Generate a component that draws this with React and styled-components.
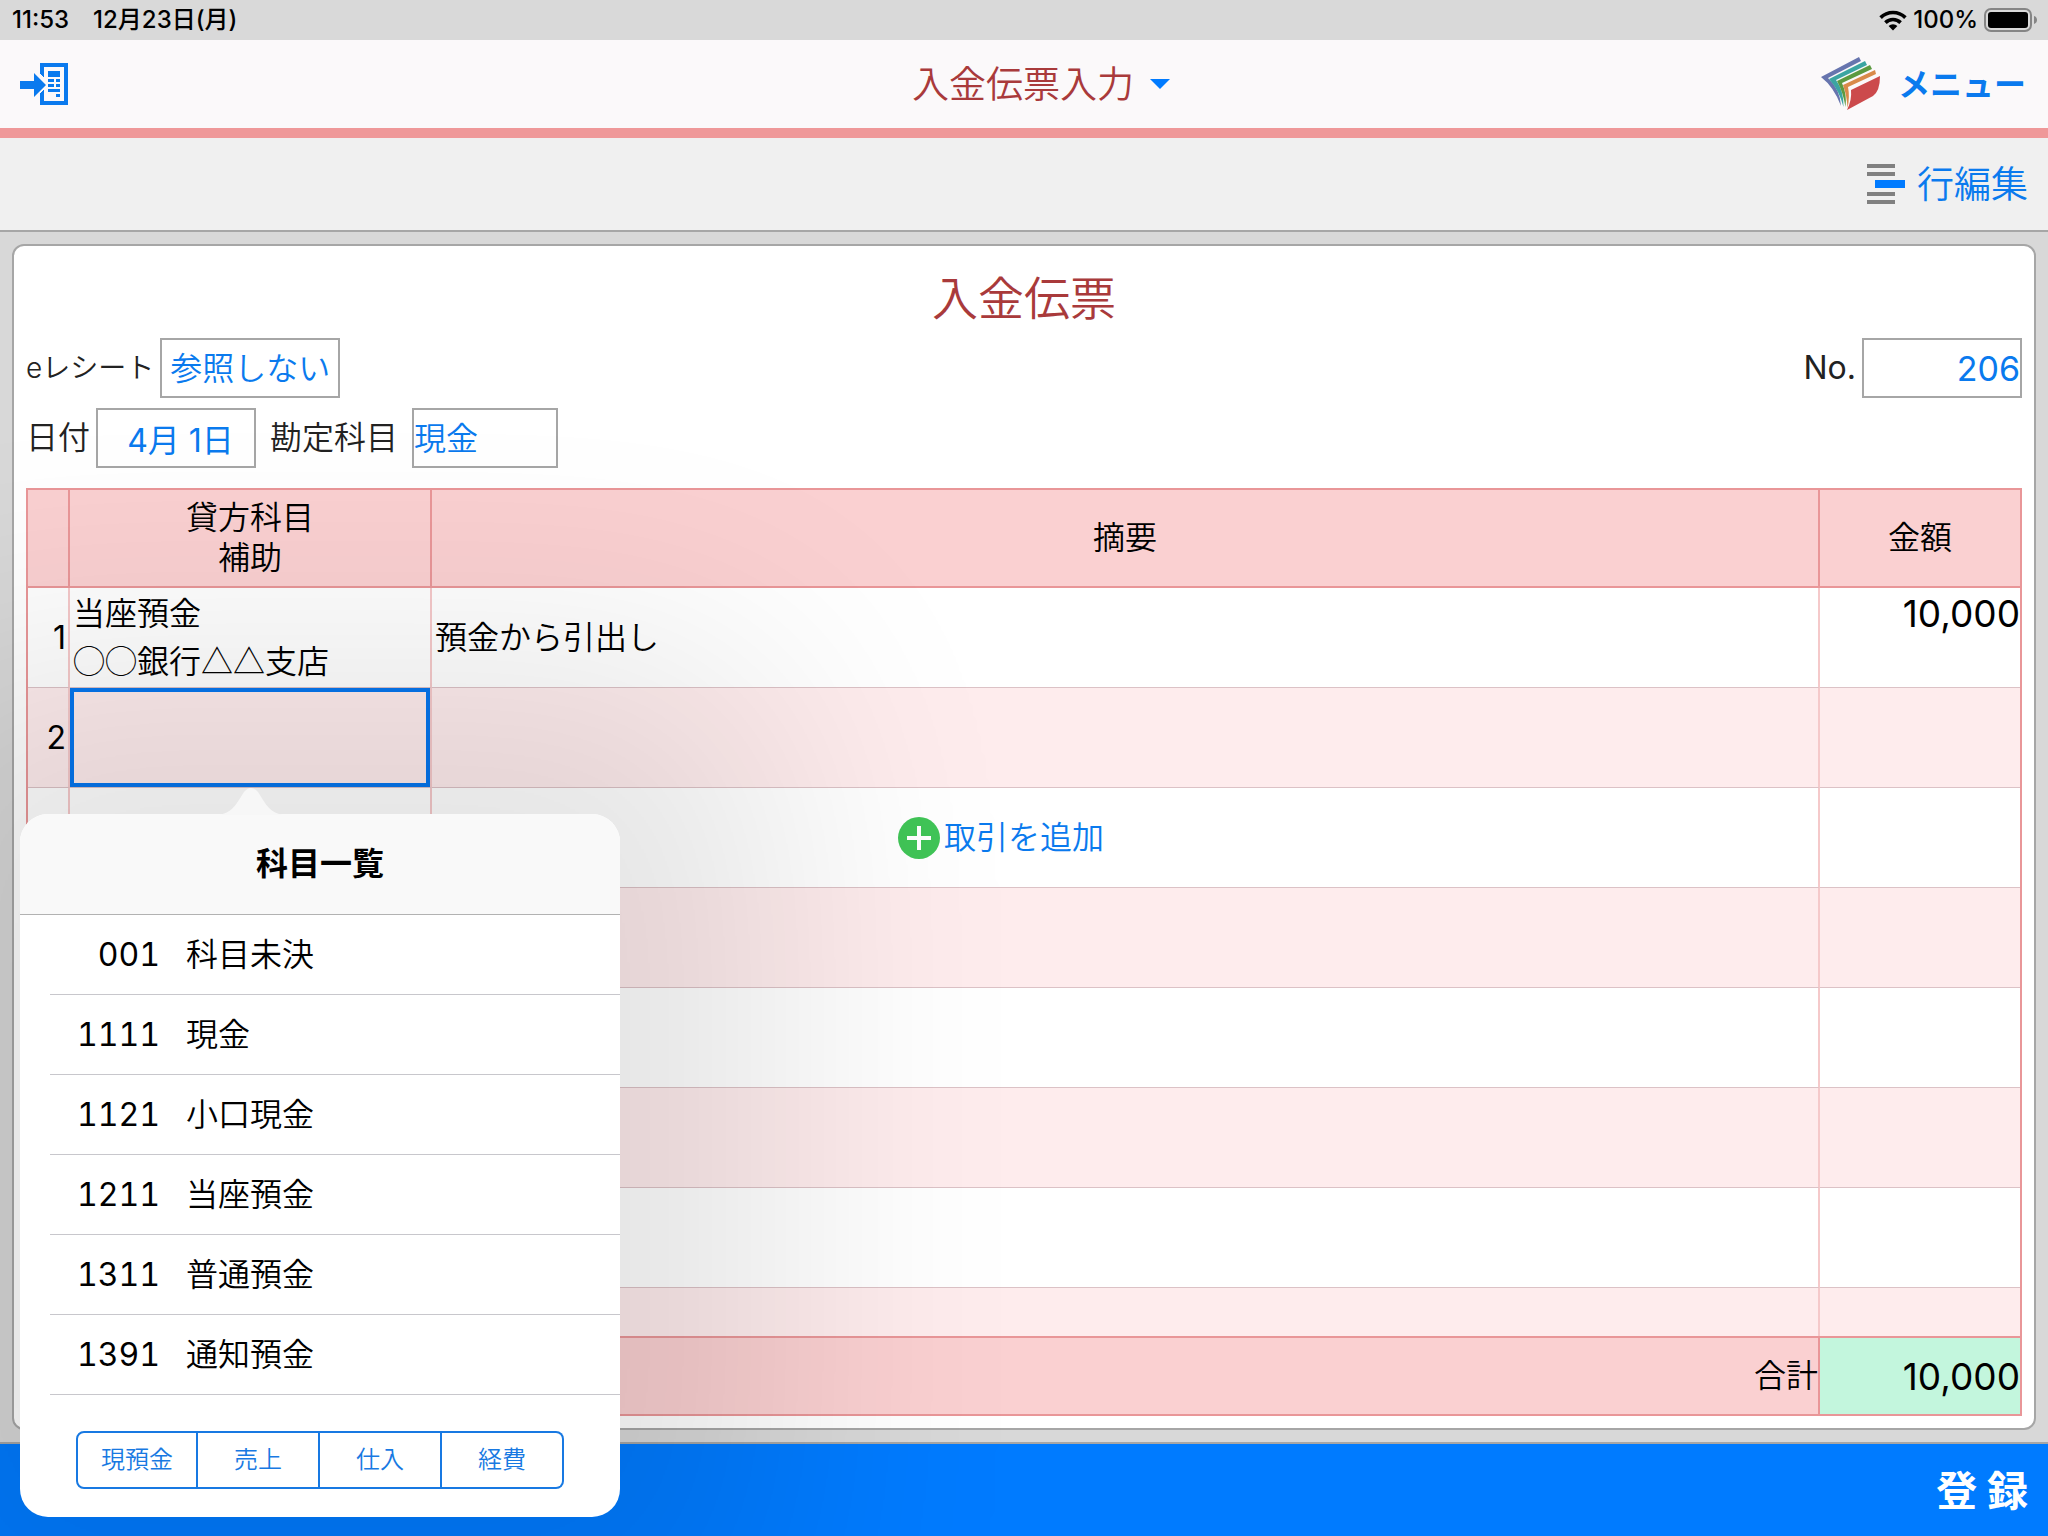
import React from "react";
import styled, { createGlobalStyle, css } from "styled-components";

const latin = `Inter, "Noto Sans CJK JP", sans-serif`;
const japanese = `"Noto Sans CJK JP", sans-serif`;
const blue = "#0a7aee";
const line = "#a6a6a6";
const rose = "#e99698";

const GlobalStyle = createGlobalStyle`
  *, *::before, *::after { box-sizing: border-box; }
  body {
    margin: 0;
    background: #d8d8d8;
    color: #000;
    font-family: ${latin};
    font-weight: 350;
    font-size: 32px;
  }
  button, input, select { font: inherit; color: inherit; margin: 0; padding: 0; border: 0; border-radius: 0; background: none; }
  button { cursor: pointer; }
`;

const Page = styled.div`
  display: flex;
  flex-direction: column;
  min-height: 100vh;
  overflow: hidden;
`;

const StatusBar = styled.div`
  display: flex;
  align-items: center;
  justify-content: space-between;
  height: 40px;
  padding: 0 10px 0 12px;
  background: #d9d9d9;
  font-size: 24px;
  font-weight: 500;
  line-height: 40px;
`;

const StatusGroup = styled.div`
  display: flex;
  align-items: center;
  gap: ${(p) => p.$gap}px;
`;

const Header = styled.header`
  display: grid;
  grid-template-columns: 1fr auto 1fr;
  align-items: center;
  height: 98px;
  padding: 0 22px 0 20px;
  background: #fbf9fa;
  border-bottom: 10px solid #ef9899;
`;

const IconButton = styled.button`
  justify-self: start;
  display: flex;
`;

const ButtonText = styled.span`
  padding-top: 2px;
  line-height: 48px;
`;

const TitleButton = styled.button`
  display: flex;
  align-items: center;
  gap: 16px;
  padding-left: 36px;
  color: #a93a3b;
  font-size: 37px;
`;

const MenuButton = styled.button`
  && {
    justify-self: end;
    display: flex;
    align-items: center;
    gap: 18px;
    color: #0a7aee;
    font-weight: 700;
  }
`;

const Toolbar = styled.div`
  display: flex;
  align-items: center;
  justify-content: flex-end;
  height: 94px;
  padding-right: 20px;
  background: #f0f0f0;
  border-bottom: 2px solid ${line};
`;

const EditButton = styled.button`
  display: flex;
  align-items: center;
  gap: 12px;
  color: ${blue};
  font-size: 37px;
`;

const Main = styled.main`
  flex: 1;
  padding: 12px;
  background: #d8d8d8;
  border-bottom: 2px solid ${line};
`;

const Card = styled.section`
  padding: 12px;
  background: #fff;
  border: 2px solid ${line};
  border-radius: 12px;
`;

const CardTitle = styled.h1`
  margin: 0;
  color: #a93a3b;
  font-size: 46px;
  font-weight: 350;
  line-height: 80px;
  text-align: center;
`;

const FormRow = styled.div`
  display: flex;
  align-items: center;
  margin-bottom: ${(p) => p.$after}px;
  color: #222;
`;

const Label = styled.label`
  padding-right: ${(p) => p.$gap}px;
  font-size: ${(p) => p.$size || 32}px;
  font-weight: ${(p) => p.$weight || 350};
  line-height: 60px;
`;

const fieldBox = css`
  width: ${(p) => p.$width}px;
  height: 60px;
  margin-right: ${(p) => p.$after || 0}px;
  border: 2px solid ${line};
  color: ${blue};
  font-size: ${(p) => p.$size || 32}px;
  text-align: ${(p) => p.$align || "left"};
  text-align-last: ${(p) => p.$align || "left"};
`;

const Field = styled.input`
  && { ${fieldBox} font-weight: 400; }
`;

const Picker = styled.select`
  && { ${fieldBox} appearance: none; }
`;

const Spacer = styled.div`
  flex: 1;
`;

const Table = styled.table`
  width: 100%;
  table-layout: fixed;
  border: 2px solid ${rose};
  border-collapse: separate;
  border-spacing: 0;
`;

const Col = styled.col`
  width: ${(p) => (p.$width ? `${p.$width}px` : "auto")};
`;

const HeadCell = styled.th`
  height: 98px;
  padding: 8px 0;
  background: #fad0d1;
  border-right: ${(p) => (p.$last ? 0 : 2)}px solid ${rose};
  border-bottom: 2px solid ${rose};
  font-weight: 350;
  line-height: 40px;
`;

const Row = styled.tr`
  height: ${(p) => (p.$short ? 48 : 100)}px;
  background: ${(p) => (p.$tinted ? "#feeced" : "#fff")};

  > td {
    border-bottom: ${(p) => (p.$short ? 0 : 1)}px solid #dcc2c6;
  }
`;

const Cell = styled.td`
  position: relative;
  padding: ${(p) => (p.$flush ? 0 : "0 2px 0 3px")};
  border-right: ${(p) => (p.$last ? 0 : 2)}px solid #f5c9ca;
  line-height: 48px;
  vertical-align: ${(p) => p.$valign || "middle"};
`;

const Branch = styled.span`
  font-family: ${japanese};
  line-height: 40px;
`;

const NumberCell = styled(Cell)`
  font-weight: 400;
  text-align: right;
`;

const AmountCell = styled(Cell)`
  padding: 2px 0 0;
  font-size: 37px;
  font-weight: 400;
  text-align: right;
`;

const TotalLabel = styled.td`
  height: 78px;
  padding: 0;
  background: #fad0d1;
  border-top: 2px solid ${rose};
  border-right: 2px solid ${rose};
  line-height: 48px;
  text-align: right;
`;

const TotalAmount = styled.td`
  padding: 0;
  background: #c3f6dd;
  border-top: 2px solid ${rose};
  font-size: 37px;
  font-weight: 400;
  text-align: right;
`;

const AccountInput = styled.input`
  && {
    display: block;
    width: 100%;
    height: 99px;
    padding: 0 8px;
    border: 4px solid #0676ee;
    outline: none;
  }
`;

const AddButton = styled.button`
  display: flex;
  align-items: center;
  gap: 4px;
  margin-left: 463px;
  color: ${blue};
`;

const Popover = styled.div`
  position: absolute;
  z-index: 2;
  top: 126px;
  left: -50px;
  width: 600px;
  padding-bottom: 28px;
  background: #fff;
  border-radius: 28px;
  box-shadow: 0 0 280px 160px rgba(0, 0, 0, 0.105);
`;

const PopoverArrow = styled.svg`
  position: absolute;
  top: -26px;
  left: 198px;
`;

const PopoverTitle = styled.h2`
  margin: 0;
  background: #f9f9f9;
  border-bottom: 1px solid #b2b2b2;
  border-radius: 28px 28px 0 0;
  font-size: 32px;
  font-weight: 700;
  line-height: 100px;
  text-align: center;
`;

const AccountList = styled.ul`
  margin: 0 0 36px 30px;
  padding: 0;
  list-style: none;
`;

const AccountButton = styled.button`
  && {
    display: flex;
    align-items: center;
    gap: 26px;
    width: 100%;
    height: 80px;
    border-bottom: 1px solid #c8c7cc;
    text-align: left;
  }
`;

const Code = styled.span`
  width: 110px;
  font-weight: 400;
  font-variant-numeric: tabular-nums;
  text-align: right;
`;

const Segments = styled.div`
  display: grid;
  grid-template-columns: repeat(4, 1fr);
  margin: 0 56px;
`;

const Segment = styled.button`
  && {
    height: 58px;
    border: 2px solid #1879e2;
    color: #1879e2;
    font-size: 24px;

    & + & { border-left: 0; }
    &:first-child { border-radius: 8px 0 0 8px; }
    &:last-child { border-radius: 0 8px 8px 0; }
  }
`;

const Footer = styled.footer`
  display: flex;
  align-items: center;
  justify-content: flex-end;
  height: 92px;
  padding: 2px 20px 0 0;
  background: #007bff;
`;

const SubmitButton = styled.button`
  && {
    color: #fff;
    font-size: 41px;
    font-weight: 700;
    line-height: 60px;
  }
`;

const WifiIcon = () => (
  <svg width="28" height="21" viewBox="0 0 28 21" aria-hidden="true">
    <g fill="none" stroke="#000" strokeWidth="3.6">
      <path d="M1.6 7.6a17.6 17.6 0 0 1 24.8 0" />
      <path d="M6.4 12.6a10.8 10.8 0 0 1 15.2 0" />
    </g>
    <path d="M9.6 16a6.2 6.2 0 0 1 8.8 0L14 20.4z" fill="#000" />
  </svg>
);

const BatteryIcon = () => (
  <svg width="54" height="24" viewBox="0 0 54 24" aria-hidden="true">
    <rect x="1" y="1" width="46" height="22" rx="6" fill="none" stroke="#858585" strokeWidth="2" />
    <rect x="4" y="4" width="40" height="16" rx="3" fill="#000" />
    <path d="M50 8c2 .6 3 2.200 3 4s-1 3.400-3 4z" fill="#858585" />
  </svg>
);

const ExitIcon = () => (
  <svg width="48" height="42" viewBox="0 0 48 42" fill="#0a7aee" shapeRendering="crispEdges" aria-hidden="true">
    <path d="M20 0H48V42H20V30L24 26.500V38H44V4H24V14L20 10.500Z" />
    <path d="M0 18H14V10L26 22L14 34V26H0Z" shapeRendering="auto" />
    <path d="M28 8H40V14H28ZM28 16H34V19H28ZM36 16H40V19H36ZM28 21H34V24H28ZM36 21H40V24H36ZM28 26H40V29H28ZM36 31H40V34H36Z" />
  </svg>
);

const CaretIcon = () => (
  <svg width="20" height="10" viewBox="0 0 20 10" aria-hidden="true">
    <path d="M0 0H20L10 10Z" fill="#007bff" />
  </svg>
);

const BooksIcon = () => (
  <svg width="60" height="54" viewBox="0 0 60 54" aria-hidden="true">
    <path d="M1 20L39 0L41 4L8 21Q20 32 21 49Q14 30 1 20Z" fill="#6775ae" />
    <path d="M9 22L45 4L47 8L16 23Q24 34 23.500 50Q19 33 9 22Z" fill="#3ba5a2" />
    <path d="M17 24L50 8L52 12L22 26Q27 37 25.500 50Q23 35 17 24Z" fill="#5c9a40" />
    <path d="M23 28L55 13L56 17L28 30Q30 40 27.500 51Q27 39 23 28Z" fill="#d98a4a" />
    <path d="M31 33L60 19Q60 34 53 39L27 53Q32 43 31 33Z" fill="#cc4a4c" />
  </svg>
);

const RowEditIcon = () => (
  <svg width="38" height="40" viewBox="0 0 38 40" aria-hidden="true">
    <path d="M0 0H28V4H0ZM0 8H28V12H0ZM0 28H28V32H0ZM0 36H28V40H0Z" fill="#808080" />
    <path d="M8 16H38V24H8Z" fill="#007bff" />
  </svg>
);

const PlusIcon = () => (
  <svg width="42" height="42" viewBox="0 0 42 42" aria-hidden="true">
    <circle cx="21" cy="21" r="21" fill="#40c557" />
    <path d="M9 21H33M21 9V33" stroke="#fff" strokeWidth="4" />
  </svg>
);

const accounts = [
  ["001", "科目未決"],
  ["1111", "現金"],
  ["1121", "小口現金"],
  ["1211", "当座預金"],
  ["1311", "普通預金"],
  ["1391", "通知預金"],
];

const groups = ["現預金", "売上", "仕入", "経費"];

const emptyRows = [4, 5, 6, 7, 8];

function AccountPopover() {
  return (
    <Popover role="dialog" aria-labelledby="accounts-title">
      <PopoverArrow width="66" height="27" viewBox="0 0 66 27" aria-hidden="true">
        <path d="M0 27C14 25 17 18 26 4Q33 -4 40 4C49 18 52 25 66 27Z" fill="#f7f7f7" />
      </PopoverArrow>
      <PopoverTitle id="accounts-title">科目一覧</PopoverTitle>
      <AccountList>
        {accounts.map(([code, name]) => (
          <li key={code}>
            <AccountButton type="button">
              <Code>{code}</Code>
              <span>{name}</span>
            </AccountButton>
          </li>
        ))}
      </AccountList>
      <Segments role="group">
        {groups.map((name) => (
          <Segment key={name} type="button">{name}</Segment>
        ))}
      </Segments>
    </Popover>
  );
}

export default function App() {
  return (
    <Page lang="ja">
      <GlobalStyle />
      <StatusBar>
        <StatusGroup $gap={24}>
          <span>11:53</span>
          <span>12月23日(月)</span>
        </StatusGroup>
        <StatusGroup $gap={6}>
          <WifiIcon />
          <span>100%</span>
          <BatteryIcon />
        </StatusGroup>
      </StatusBar>

      <Header>
        <IconButton type="button"><ExitIcon /></IconButton>
        <TitleButton type="button">
          <ButtonText>入金伝票入力</ButtonText>
          <CaretIcon />
        </TitleButton>
        <MenuButton type="button">
          <BooksIcon />
          <ButtonText>メニュー</ButtonText>
        </MenuButton>
      </Header>

      <Toolbar>
        <EditButton type="button">
          <RowEditIcon />
          <ButtonText>行編集</ButtonText>
        </EditButton>
      </Toolbar>

      <Main>
        <Card>
          <CardTitle>入金伝票</CardTitle>
          <FormRow $after={10}>
            <Label htmlFor="receipt" $size={28} $gap={6}>eレシート</Label>
            <Picker id="receipt" $width={180} $align="center">
              <option>参照しない</option>
            </Picker>
            <Spacer />
            <Label htmlFor="number" $weight={400} $gap={6}>No.</Label>
            <Field id="number" defaultValue="206" $width={160} $size={34} $align="right" />
          </FormRow>
          <FormRow $after={20}>
            <Label htmlFor="date" $gap={6}>日付</Label>
            <Field id="date" defaultValue=" 4月 1日" $width={160} $align="center" $after={14} />
            <Label htmlFor="account" $gap={14}>勘定科目</Label>
            <Picker id="account" $width={146}>
              <option>現金</option>
            </Picker>
          </FormRow>

          <Table>
            <colgroup>
              <Col $width={42} />
              <Col $width={362} />
              <Col />
              <Col $width={200} />
            </colgroup>
            <thead>
              <tr>
                <HeadCell />
                <HeadCell scope="col">貸方科目<br />補助</HeadCell>
                <HeadCell scope="col">摘要</HeadCell>
                <HeadCell scope="col" $last>金額</HeadCell>
              </tr>
            </thead>
            <tbody>
              <Row>
                <NumberCell>1</NumberCell>
                <Cell>当座預金<br /><Branch>◯◯銀行△△支店</Branch></Cell>
                <Cell>預金から引出し</Cell>
                <AmountCell $last $valign="top">10,000</AmountCell>
              </Row>
              <Row $tinted>
                <NumberCell>2</NumberCell>
                <Cell $flush>
                  <AccountInput aria-label="貸方科目" />
                  <AccountPopover />
                </Cell>
                <Cell />
                <Cell $last />
              </Row>
              <Row>
                <Cell />
                <Cell />
                <Cell>
                  <AddButton type="button">
                    <PlusIcon />
                    <span>取引を追加</span>
                  </AddButton>
                </Cell>
                <Cell $last />
              </Row>
              {emptyRows.map((n) => (
                <Row key={n} $tinted={n % 2 === 0} $short={n === 8}>
                  <Cell />
                  <Cell />
                  <Cell />
                  <Cell $last />
                </Row>
              ))}
            </tbody>
            <tfoot>
              <tr>
                <TotalLabel colSpan={3}>合計</TotalLabel>
                <TotalAmount>10,000</TotalAmount>
              </tr>
            </tfoot>
          </Table>
        </Card>
      </Main>

      <Footer>
        <SubmitButton type="submit">登 録</SubmitButton>
      </Footer>
    </Page>
  );
}
